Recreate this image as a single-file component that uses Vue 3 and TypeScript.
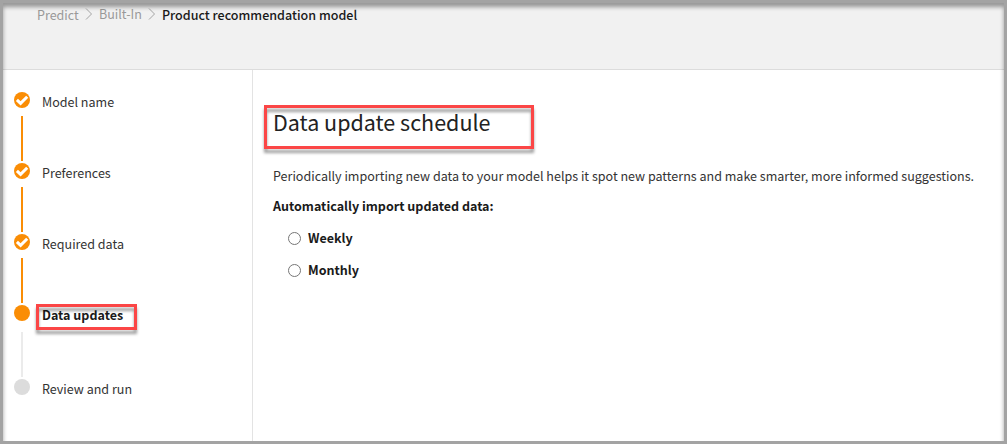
<script setup lang="ts">
type StepState = 'done' | 'current' | 'upcoming'
interface Step { label: string; state: StepState }

const parents: string[] = ['Predict', 'Built-In']
const steps: Step[] = [
  { label: 'Model name', state: 'done' },
  { label: 'Preferences', state: 'done' },
  { label: 'Required data', state: 'done' },
  { label: 'Data updates', state: 'current' },
  { label: 'Review and run', state: 'upcoming' },
]
const schedules: string[] = ['Weekly', 'Monthly']
</script>

<template>
  <div class="frame">
    <header class="topbar">
      <nav class="crumbs">
        <template v-for="(name, i) in parents" :key="name">
          <a class="crumb" :class="`crumb-${i}`">{{ name }}</a>
          <svg class="chevron" width="8" height="14" viewBox="0 0 8 14">
            <path d="M1 1.5 L6.5 7 L1 12.5" fill="none" stroke="#a5a5a5" stroke-width="1" />
          </svg>
        </template>
        <span class="here">Product recommendation model</span>
      </nav>
    </header>
    <div class="body">
      <aside class="steps">
        <div v-for="step in steps" :key="step.label" class="step" :class="step.state">
          <div class="rail">
            <span class="dot">
              <svg v-if="step.state === 'done'" width="16" height="16" viewBox="0 0 16 16">
                <path d="M2.9 7.8 L6.6 11.4 L13.2 4.8" fill="none" stroke="#fff" stroke-width="3" />
              </svg>
            </span>
            <span class="line"></span>
          </div>
          <div class="label">{{ step.label }}<span v-if="step.state === 'current'" class="mark"></span></div>
        </div>
      </aside>
      <main class="content">
        <h1>Data update schedule<span class="mark"></span></h1>
        <p class="intro">Periodically importing new data to your model helps it spot new patterns and make smarter, more informed suggestions.</p>
        <p class="question">Automatically import updated data:</p>
        <label v-for="name in schedules" :key="name" class="option">
          <input type="radio" name="schedule" :value="name" />
          <span>{{ name }}</span>
        </label>
      </main>
    </div>
  </div>
</template>

<style>
body { margin: 0; overflow: hidden; }
</style>

<style scoped>
.frame {
  position: relative;
  box-sizing: border-box;
  width: 1007px;
  height: 444px;
  border: 3px solid #a3a3a3;
  background: #fff;
  display: flex;
  flex-direction: column;
  font-family: "Noto Sans CJK SC", "Noto Sans", sans-serif;
  font-size: 12.54px;
  line-height: 20px;
  color: #333;
  white-space: nowrap;
}
.frame::after {
  content: "";
  position: absolute;
  inset: 0 0 -4px;
  box-shadow: inset 0 4px 4px rgba(0, 0, 0, 0.38);
  pointer-events: none;
  clip-path: inset(0 0 4px);
}
.topbar {
  box-sizing: border-box;
  flex: none;
  height: 67px;
  background: #f1f1f1;
  border-bottom: 1px solid #dcdcdc;
  padding: 2px 0 0 34px;
}
.crumbs { display: flex; align-items: flex-start; height: 20px; }
.crumb { color: #999; }
.crumb-0 { width: 48px; }
.crumb-1 { width: 49px; margin-top: -1px; }
.chevron { margin: 2px 6px 0 0; }
.here { font-weight: 500; color: #1a1a1a; }
.body { flex: 1; min-height: 0; display: flex; }
.steps {
  box-sizing: border-box;
  flex: none;
  width: 250px;
  border-right: 1px solid #e3e3e3;
  padding: 22px 0 0 11px;
}
.step { display: flex; height: 71px; }
.rail { width: 16px; display: flex; flex-direction: column; align-items: center; }
.dot { width: 16px; height: 16px; border-radius: 50%; background: #fa8d05; }
.dot svg { display: block; }
.line { width: 2px; height: 45px; margin-top: 8px; background: #fa8d05; }
.label { position: relative; height: 20px; margin-left: 12px; }
.current { height: 74px; }
.current .line { margin-top: 11px; background: #ebebeb; }
.current .label { font-weight: 700; color: #1a1a1a; }
.upcoming { height: 20px; }
.upcoming .dot { background: #dcdcdc; }
.upcoming .line { display: none; }
.mark {
  position: absolute;
  box-sizing: border-box;
  border: 3px solid #fb4646;
  filter: drop-shadow(0 4px 1.5px rgba(0, 0, 0, 0.38));
}
.label .mark { left: -6px; top: -1px; width: 101px; height: 26px; }
.content { padding: 36px 0 0 20px; }
h1 {
  position: relative;
  margin: 0;
  height: 34px;
  line-height: 32px;
  font-size: 21.5px;
  font-weight: 400;
  color: #222;
}
h1 .mark { left: -9px; top: -1px; width: 270px; height: 44px; }
.intro { margin: 26px 0 0; }
.question { margin: 10px 0 0; font-weight: 700; color: #1a1a1a; }
.option { display: flex; align-items: center; height: 20px; margin-top: 12px; padding-left: 15px; font-weight: 700; color: #1a1a1a; }
.option input { margin: 0 7px 0 0; width: 13px; height: 13px; }
</style>
